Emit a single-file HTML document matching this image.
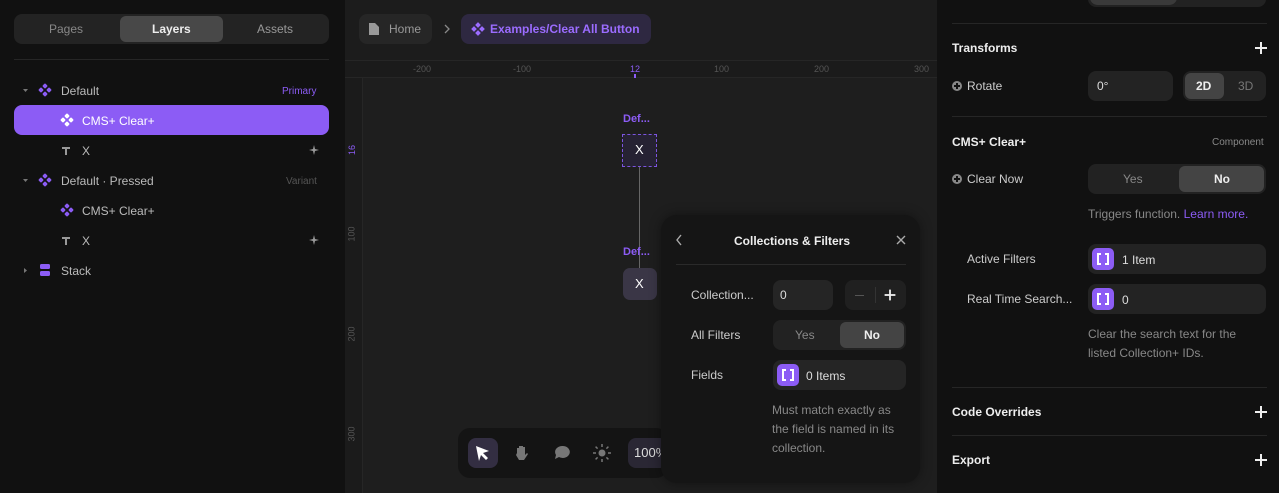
<!DOCTYPE html>
<html><head><meta charset="utf-8"><style>
*{box-sizing:border-box;margin:0;padding:0}
body{width:1279px;height:493px;overflow:hidden;background:#1e1e1e;font-family:"Liberation Sans",sans-serif;font-size:12px;color:#ccc;position:relative}
.a{position:absolute}
.t{position:absolute;line-height:14px;white-space:nowrap}
.pill{position:absolute;border-radius:8px}
.b{font-weight:bold}
.ic{position:absolute;width:22px;height:22px;border-radius:5px;background:#8c5cf5}
.ic svg{position:absolute;left:5px;top:5px}
.plus{position:absolute;width:12px;height:12px}
.plus:before{content:"";position:absolute;left:5px;top:0;width:2px;height:12px;background:#eee}
.plus:after{content:"";position:absolute;left:0;top:5px;width:12px;height:2px;background:#eee}
.cp{position:absolute;width:10px;height:10px;border-radius:50%;background:#888}
.cp:before{content:"";position:absolute;left:4px;top:2px;width:2px;height:6px;background:#111}
.cp:after{content:"";position:absolute;left:2px;top:4px;width:6px;height:2px;background:#111}
</style></head><body>
<!-- left panel -->
<div class="a" style="left:0;top:0;width:345px;height:493px;background:#111"></div>
<div class="pill" style="left:14px;top:14px;width:315px;height:30px;background:#232323"></div>
<div class="pill" style="left:120px;top:16px;width:103px;height:26px;background:#484848;border-radius:6px"></div>
<div class="t" style="left:49px;top:22px;color:#888">Pages</div>
<div class="t b" style="left:152px;top:22px;color:#eee">Layers</div>
<div class="t" style="left:257px;top:22px;color:#999">Assets</div>
<div class="a" style="left:14px;top:59px;width:315px;height:1px;background:#262626"></div>
<div class="pill" style="left:14px;top:105px;width:315px;height:30px;background:#8c5cf5"></div>
<svg class="a" style="left:0;top:0" width="345" height="290">
<g fill="#777"><path d="M23 89h5l-2.5 3z"/><path d="M23 179h5l-2.5 3z"/><path d="M24 268v5l3-2.5z"/></g>
<g fill="#8c5cf5"><g transform="translate(45 90)"><rect x="-2" y="-6" width="4" height="4" rx="1" transform="rotate(45 0 -4)"/><rect x="-2" y="2" width="4" height="4" rx="1" transform="rotate(45 0 4)"/><rect x="-6" y="-2" width="4" height="4" rx="1" transform="rotate(45 -4 0)"/><rect x="2" y="-2" width="4" height="4" rx="1" transform="rotate(45 4 0)"/></g>
<g transform="translate(45 180)"><rect x="-2" y="-6" width="4" height="4" rx="1" transform="rotate(45 0 -4)"/><rect x="-2" y="2" width="4" height="4" rx="1" transform="rotate(45 0 4)"/><rect x="-6" y="-2" width="4" height="4" rx="1" transform="rotate(45 -4 0)"/><rect x="2" y="-2" width="4" height="4" rx="1" transform="rotate(45 4 0)"/></g>
<g transform="translate(67 210)"><rect x="-2" y="-6" width="4" height="4" rx="1" transform="rotate(45 0 -4)"/><rect x="-2" y="2" width="4" height="4" rx="1" transform="rotate(45 0 4)"/><rect x="-6" y="-2" width="4" height="4" rx="1" transform="rotate(45 -4 0)"/><rect x="2" y="-2" width="4" height="4" rx="1" transform="rotate(45 4 0)"/></g>
<rect x="40" y="264" width="10" height="5" rx="1.5"/><rect x="40" y="271" width="10" height="5" rx="1.5"/></g>
<g fill="#fff" transform="translate(67 120)"><rect x="-2" y="-6" width="4" height="4" rx="1" transform="rotate(45 0 -4)"/><rect x="-2" y="2" width="4" height="4" rx="1" transform="rotate(45 0 4)"/><rect x="-6" y="-2" width="4" height="4" rx="1" transform="rotate(45 -4 0)"/><rect x="2" y="-2" width="4" height="4" rx="1" transform="rotate(45 4 0)"/></g>
<g fill="#999"><path d="M62 147h8v2h-3v6h-2v-6h-3z"/><path d="M62 237h8v2h-3v6h-2v-6h-3z"/>
<path d="M314 145l1 4 4 1-4 1-1 4-1-4-4-1 4-1z"/><path d="M314 235l1 4 4 1-4 1-1 4-1-4-4-1 4-1z"/></g>
</svg>
<div class="t" style="left:61px;top:84px;color:#bbb">Default</div>
<div class="t" style="left:282px;top:85px;color:#8c5cf5;font-size:10px">Primary</div>
<div class="t" style="left:82px;top:114px;color:#fff">CMS+ Clear+</div>
<div class="t" style="left:82px;top:144px;color:#bbb">X</div>
<div class="t" style="left:61px;top:174px;color:#bbb">Default · Pressed</div>
<div class="t" style="left:286px;top:175px;color:#555;font-size:10px">Variant</div>
<div class="t" style="left:82px;top:204px;color:#bbb">CMS+ Clear+</div>
<div class="t" style="left:82px;top:234px;color:#bbb">X</div>
<div class="t" style="left:61px;top:264px;color:#bbb">Stack</div>
<!-- canvas -->
<div class="a" style="left:345px;top:0;width:592px;height:60px;background:#1c1c1c"></div>
<div class="pill" style="left:359px;top:14px;width:73px;height:30px;background:#262626"></div>
<svg class="a" style="left:368px;top:22px" width="12" height="14"><path d="M1 1h6l4 4v8H1z" fill="#999"/></svg>
<div class="t" style="left:389px;top:22px;color:#999">Home</div>
<svg class="a" style="left:443px;top:24px" width="8" height="10"><path d="M2 1l4 4-4 4" stroke="#888" fill="none" stroke-width="1.3"/></svg>
<div class="pill" style="left:461px;top:14px;width:190px;height:30px;background:#2e2841"></div>
<svg class="a" style="left:471px;top:22px" width="14" height="14"><g fill="#9b6cff"><rect x="5" y="1" width="4" height="4" transform="rotate(45 7 3)"/><rect x="5" y="9" width="4" height="4" transform="rotate(45 7 11)"/><rect x="1" y="5" width="4" height="4" transform="rotate(45 3 7)"/><rect x="9" y="5" width="4" height="4" transform="rotate(45 11 7)"/></g></svg>
<div class="t b" style="left:490px;top:22px;color:#9b6cff">Examples/Clear All Button</div>
<div class="a" style="left:345px;top:60px;width:592px;height:18px;background:#1b1b1b;border-top:1px solid #262626;border-bottom:1px solid #262626"></div>
<div class="a" style="left:345px;top:78px;width:18px;height:415px;background:#1b1b1b;border-right:1px solid #262626"></div>
<div class="t" style="left:413px;top:62px;font-size:9px;color:#555">-200</div>
<div class="t" style="left:513px;top:62px;font-size:9px;color:#555">-100</div>
<div class="t" style="left:630px;top:62px;font-size:9px;color:#8c5cf5">12</div>
<div class="t" style="left:714px;top:62px;font-size:9px;color:#555">100</div>
<div class="t" style="left:814px;top:62px;font-size:9px;color:#555">200</div>
<div class="t" style="left:914px;top:62px;font-size:9px;color:#555">300</div>
<div class="a" style="left:634px;top:74px;width:2px;height:4px;background:#8c5cf5"></div>
<div class="t" style="left:347px;top:143px;font-size:9px;color:#8c5cf5;transform:rotate(-90deg)">16</div>
<div class="t" style="left:344px;top:227px;font-size:9px;color:#555;transform:rotate(-90deg)">100</div>
<div class="t" style="left:344px;top:327px;font-size:9px;color:#555;transform:rotate(-90deg)">200</div>
<div class="t" style="left:344px;top:427px;font-size:9px;color:#555;transform:rotate(-90deg)">300</div>
<div class="t b" style="left:623px;top:112px;color:#8c5cf5;font-size:11px">Def...</div>
<div class="a" style="left:622px;top:134px;width:35px;height:33px;border:1.5px dashed #7c55e0;background:#262233"></div>
<div class="t" style="left:635px;top:143px;color:#fff;font-size:13px">X</div>
<div class="a" style="left:639px;top:167px;width:1px;height:101px;background:#666"></div>
<div class="t b" style="left:623px;top:245px;color:#8c5cf5;font-size:11px">Def...</div>
<div class="a" style="left:623px;top:268px;width:34px;height:32px;border-radius:7px;background:#3a3646"></div>
<div class="t" style="left:635px;top:277px;color:#fff;font-size:13px">X</div>
<!-- toolbar -->
<div class="a" style="left:458px;top:428px;width:210px;height:50px;border-radius:12px;background:#141414"></div>
<div class="pill" style="left:468px;top:438px;width:30px;height:30px;background:#332e42"></div>
<svg class="a" style="left:474px;top:444px" width="18" height="18"><path d="M2 2l13 5-6 2 5 5-2 2-5-5-2 6z" fill="#fff"/></svg>
<svg class="a" style="left:513px;top:444px" width="18" height="18"><path d="M4 9V4h2v5V2h2v7V2h2v7V3h2v8l2-2 1 1-4 6H6l-3-5z" fill="#777"/></svg>
<svg class="a" style="left:553px;top:444px" width="18" height="18"><path d="M9 2a7 6 0 1 1-3 11l-4 2 1-4A7 6 0 0 1 9 2z" fill="#777"/></svg>
<svg class="a" style="left:593px;top:444px" width="18" height="18"><circle cx="9" cy="9" r="3.5" fill="#777"/><g stroke="#777" stroke-width="1.5"><path d="M9 0v3M9 15v3M0 9h3M15 9h3M2.6 2.6l2 2M13.4 13.4l2 2M2.6 15.4l2-2M13.4 4.6l2-2"/></g></svg>
<div class="pill" style="left:628px;top:438px;width:40px;height:30px;background:#2a2734"></div>
<div class="t" style="left:634px;top:446px;color:#ddd;font-size:13px">100%</div>
<!-- popup -->
<div class="a" style="left:661px;top:215px;width:259px;height:268px;border-radius:16px;background:#151515;box-shadow:0 0 12px rgba(0,0,0,.4)"></div>
<svg class="a" style="left:674px;top:234px" width="10" height="12"><path d="M7 1L3 6l4 5" stroke="#aaa" fill="none" stroke-width="1.4"/></svg>
<div class="t b" style="left:734px;top:234px;color:#eee">Collections &amp; Filters</div>
<svg class="a" style="left:896px;top:235px" width="10" height="10"><path d="M1 1l8 8M9 1l-8 8" stroke="#aaa" stroke-width="1.4"/></svg>
<div class="a" style="left:676px;top:264px;width:230px;height:1px;background:#2a2a2a"></div>
<div class="t" style="left:691px;top:288px;color:#ccc">Collection...</div>
<div class="pill" style="left:773px;top:280px;width:60px;height:30px;background:#252525"></div>
<div class="t" style="left:780px;top:288px;color:#ddd">0</div>
<div class="pill" style="left:845px;top:280px;width:61px;height:30px;background:#202020"></div>
<div class="a" style="left:855px;top:295px;width:9px;height:1px;background:#555"></div>
<div class="a" style="left:875px;top:287px;width:1px;height:16px;background:#333"></div>
<div class="plus" style="left:884px;top:289px;transform:scale(.9)"></div>
<div class="t" style="left:691px;top:328px;color:#ccc">All Filters</div>
<div class="pill" style="left:773px;top:320px;width:133px;height:30px;background:#222"></div>
<div class="pill" style="left:840px;top:322px;width:64px;height:26px;background:#444;border-radius:6px"></div>
<div class="t" style="left:795px;top:328px;color:#888">Yes</div>
<div class="t b" style="left:864px;top:328px;color:#eee">No</div>
<div class="t" style="left:691px;top:368px;color:#ccc">Fields</div>
<div class="pill" style="left:773px;top:360px;width:133px;height:30px;background:#252525"></div>
<div class="ic" style="left:777px;top:364px"><svg width="12" height="12"><path d="M4 1H1v10h3M8 1h3v10H8" stroke="#fff" stroke-width="2" fill="none"/></svg></div>
<div class="t" style="left:806px;top:369px;color:#ddd">0 Items</div>
<div class="t" style="left:772px;top:401px;color:#888;line-height:19px">Must match exactly as<br>the field is named in its<br>collection.</div>
<!-- right panel -->
<div class="a" style="left:937px;top:0;width:342px;height:493px;background:#111"></div>
<div class="pill" style="left:1088px;top:-10px;width:178px;height:17px;background:#222"></div>
<div class="pill" style="left:1090px;top:-10px;width:87px;height:15px;background:#3a3a3a"></div>
<div class="a" style="left:952px;top:23px;width:315px;height:1px;background:#262626"></div>
<div class="a" style="left:952px;top:116px;width:315px;height:1px;background:#262626"></div>
<div class="a" style="left:952px;top:387px;width:315px;height:1px;background:#262626"></div>
<div class="a" style="left:952px;top:435px;width:315px;height:1px;background:#262626"></div>
<div class="t b" style="left:952px;top:41px;color:#eee">Transforms</div>
<div class="plus" style="left:1255px;top:42px"></div>
<div class="cp" style="left:952px;top:81px"></div>
<div class="t" style="left:967px;top:79px;color:#ccc">Rotate</div>
<div class="pill" style="left:1088px;top:71px;width:85px;height:30px;background:#232323"></div>
<div class="t" style="left:1097px;top:79px;color:#ddd">0°</div>
<div class="pill" style="left:1183px;top:71px;width:83px;height:30px;background:#222"></div>
<div class="pill" style="left:1185px;top:73px;width:39px;height:26px;background:#444;border-radius:6px"></div>
<div class="t b" style="left:1196px;top:79px;color:#eee">2D</div>
<div class="t" style="left:1238px;top:79px;color:#777">3D</div>
<div class="t b" style="left:952px;top:135px;color:#eee">CMS+ Clear+</div>
<div class="t" style="left:1212px;top:136px;color:#888;font-size:10px">Component</div>
<div class="cp" style="left:952px;top:174px"></div>
<div class="t" style="left:967px;top:172px;color:#ccc">Clear Now</div>
<div class="pill" style="left:1088px;top:164px;width:178px;height:30px;background:#222"></div>
<div class="pill" style="left:1179px;top:166px;width:85px;height:26px;background:#444;border-radius:6px"></div>
<div class="t" style="left:1123px;top:172px;color:#888">Yes</div>
<div class="t b" style="left:1214px;top:172px;color:#eee">No</div>
<div class="t" style="left:1088px;top:207px;color:#888">Triggers function. <span style="color:#8c5cf5">Learn more.</span></div>
<div class="t" style="left:967px;top:252px;color:#ccc">Active Filters</div>
<div class="pill" style="left:1088px;top:244px;width:178px;height:30px;background:#232323"></div>
<div class="ic" style="left:1092px;top:248px"><svg width="12" height="12"><path d="M4 1H1v10h3M8 1h3v10H8" stroke="#fff" stroke-width="2" fill="none"/></svg></div>
<div class="t" style="left:1122px;top:253px;color:#ddd">1 Item</div>
<div class="t" style="left:967px;top:292px;color:#ccc">Real Time Search...</div>
<div class="pill" style="left:1088px;top:284px;width:178px;height:30px;background:#232323"></div>
<div class="ic" style="left:1092px;top:288px"><svg width="12" height="12"><path d="M4 1H1v10h3M8 1h3v10H8" stroke="#fff" stroke-width="2" fill="none"/></svg></div>
<div class="t" style="left:1122px;top:293px;color:#ddd">0</div>
<div class="t" style="left:1088px;top:325px;color:#888;line-height:19px">Clear the search text for the<br>listed Collection+ IDs.</div>
<div class="t b" style="left:952px;top:405px;color:#eee">Code Overrides</div>
<div class="plus" style="left:1255px;top:406px"></div>
<div class="t b" style="left:952px;top:453px;color:#eee">Export</div>
<div class="plus" style="left:1255px;top:454px"></div>
</body></html>
